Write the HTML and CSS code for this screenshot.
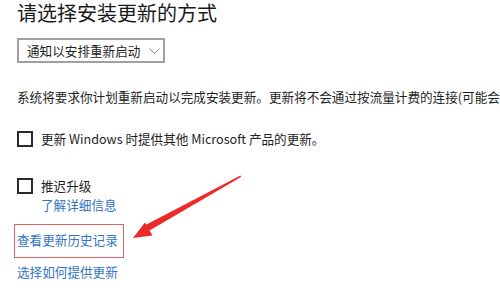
FILE: index.html
```html
<!DOCTYPE html>
<html lang="zh-CN">
<head>
    <meta charset="UTF-8">
    <title>Windows 更新 - 高级选项</title>
    <link rel="stylesheet" href="styles.css">
</head>
<body>

    <div class="page">

        <h1 class="title">请选择安装更新的方式</h1>

        <div class="dropdown">
            <span>通知以安排重新启动</span>
            <svg class="chevron" width="11" height="7" viewBox="0 0 11 7">
                <polyline points="0.5,0.5 5.5,5.5 10.5,0.5" fill="none" stroke="#8a8a8a" stroke-width="1"/>
            </svg>
        </div>

        <p class="note">系统将要求你计划重新启动以完成安装更新。更新将不会通过按流量计费的连接(可能会收取费用)自动下载。</p>

        <label class="check first">
            <span class="box"></span>
            <span>更新 Windows 时提供其他 Microsoft 产品的更新。</span>
        </label>

        <label class="check second">
            <span class="box"></span>
            <span>推迟升级</span>
        </label>
        <a class="link more" href="#">了解详细信息</a>

        <div class="marked">
            <a class="link" href="#">查看更新历史记录</a>
        </div>

        <a class="link deliver" href="#">选择如何提供更新</a>

        <!-- annotation arrow -->
        <svg class="arrow" width="500" height="300" viewBox="0 0 500 300">
            <polygon points="240.5,175.5 241,177 147,232 143.5,226" fill="#ec2a2a"/>
            <polygon points="133,238 145,222.5 152.5,235.5" fill="#ec2a2a"/>
        </svg>

    </div>

</body>
</html>
```

FILE: styles.css
```css
body {
    margin: 0;
    background: #fff;
    color: #1e1e1e;
    font-family: "Noto Sans CJK SC", "Noto Sans", sans-serif;
    font-size: 12.6px;
}

.page {
    position: relative;
    padding: 0 0 0 17px;
    width: 500px;
    height: 300px;
    box-sizing: border-box;
    overflow: hidden;
}

.title {
    margin: 0;
    font-size: 20px;
    font-weight: normal;
    line-height: 26px;
    color: #1a1a1a;
}

.dropdown {
    margin-top: 12px;
    width: 148px;
    height: 25px;
    box-sizing: border-box;
    border: 2px solid #a0a0a0;
    display: flex;
    align-items: center;
    padding-left: 8px;
    gap: 9px;
    line-height: 18px;
}

.chevron {
    margin-top: 1px;
}

.note {
    margin: 25px 0 0;
    line-height: 18px;
    white-space: nowrap;
    overflow: hidden;
}

.check {
    display: flex;
    align-items: center;
    gap: 8px;
    line-height: 18px;
}

.check.first {
    margin-top: 24px;
}

.check.second {
    margin-top: 29px;
}

.box {
    width: 16px;
    height: 16px;
    box-sizing: border-box;
    border: 2px solid #2a2a2a;
}

.link {
    display: block;
    color: #3474c6;
    text-decoration: none;
    line-height: 18px;
}

.more {
    margin-left: 24px;
    margin-top: 1px;
}

.marked {
    display: inline-block;
    margin: 10px 0 0 -3px;
    padding: 6px 5px 8px 2px;
    border: 1px solid #e06262;
}

.deliver {
    margin-top: 5px;
}

.arrow {
    position: absolute;
    left: 0;
    top: 0;
    pointer-events: none;
}
```
